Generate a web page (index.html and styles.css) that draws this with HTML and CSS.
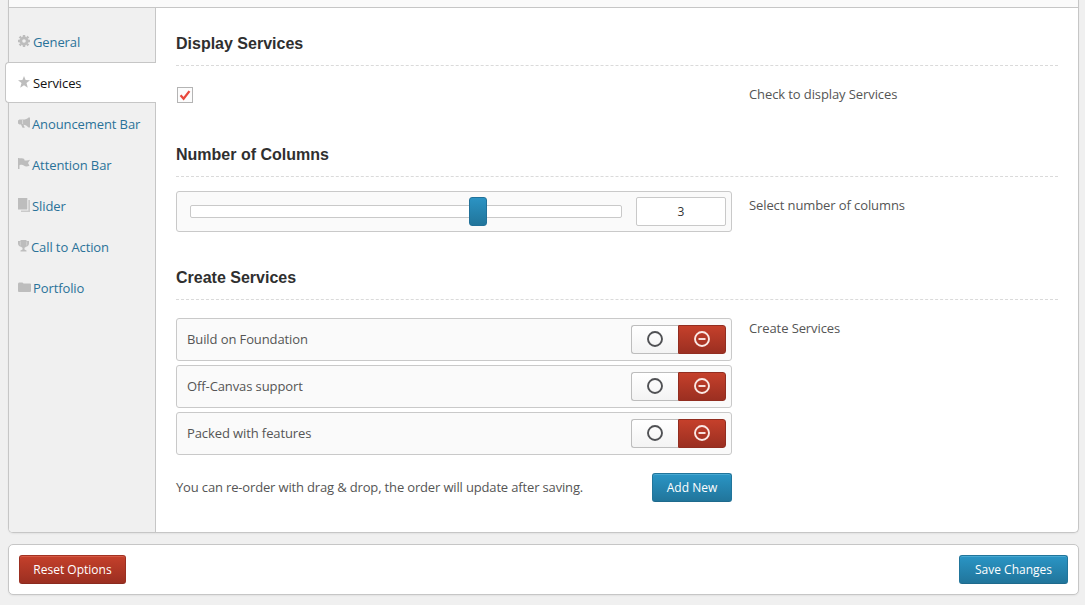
FILE: index.html
```html
<!DOCTYPE html>
<html lang="en">
<head>
<meta charset="utf-8">
<title>Theme Options</title>
<link rel="stylesheet" href="styles.css">
</head>
<body>
<main class="panel">
  <header class="panel-head"></header>
  <div class="panel-body">
    <nav class="nav">
      <a class="nav-item"><svg class="ico" viewBox="0 0 12 12"><g fill="none" stroke="#bdbdbd"><circle cx="6" cy="6" r="3.200" stroke-width="2.800"/><path stroke-width="2.400" d="M6 0v2M6 10v2M0 6h2M10 6h2M1.600 1.600l1.400 1.400M9 9l1.400 1.400M10.400 1.600L9 3M3 9l-1.400 1.400"/></g></svg><span class="t3">General</span></a>
      <a class="nav-item active"><svg class="ico" viewBox="0 0 12 12"><path d="M6 0l1.600 4.100 4.400.2-3.500 2.800L9.800 11.800 6 9.200 2.200 11.800 3.500 7.100 0 4.300l4.400-.2z"/></svg><span class="t3">Services</span></a>
      <a class="nav-item"><svg class="ico" viewBox="0 0 12 12"><path d="M10.500.500h1.500v10h-1.500C9 8.800 7.500 8 5.500 7.700l1.300 3.100H4.500L3 7.500H1.500L0 6.500v-3l1.500-1H5C7.500 2.500 9 2 10.500.500z"/><path d="M4.600 3v4" stroke="#f0f0f0" stroke-width=".6"/></svg><span class="t2">Anouncement Bar</span></a>
      <a class="nav-item"><svg class="ico" viewBox="0 0 12 12"><path d="M0 0h1.500v.6c2-.8 3.500-.4 4.800.3v1.300c1.800.7 3.700.5 5.700-.4L10 5l1.500 2.800C9 8.800 7 8.600 5.800 7.400 4.500 6.700 3 6.700 1.500 7.300V11H0z"/></svg><span class="t2">Attention Bar</span></a>
      <a class="nav-item"><svg class="ico ico-tall" viewBox="0 0 12 14"><path d="M0 0h9.300v11.500H0z"/><path opacity=".75" d="M10.300 2H12v12H3v-1.500h7.300z"/></svg><span class="t2">Slider</span></a>
      <a class="nav-item"><svg class="ico ico-cup" viewBox="0 0 11 12"><path d="M2.500 0h6v1H11v2.500C11 5.500 9.500 6.500 7.800 6.700c-.4.600-.9.900-1.300 1.100V9.500L8.500 10.500v1h-6v-1l2-1V7.800c-.4-.2-.9-.5-1.300-1.100C1.500 6.500 0 5.500 0 3.500V1h2.500z"/><path fill="none" stroke="#f0f0f0" stroke-width=".4" d="M2.300 1.500v4M8.700 1.500v4"/></svg><span class="t1">Call to Action</span></a>
      <a class="nav-item"><svg class="ico ico-folder" viewBox="0 0 13 11"><path d="M0 2Q0 .5 1 .5h3.500l1 1H12q1 0 1 1V9q0 1-1 1H1Q0 10 0 9z"/></svg><span class="t3">Portfolio</span></a>
    </nav>
    <div class="content">
      <section class="section s-check">
        <h3>Display Services</h3>
        <div class="row">
          <div class="field"><span class="checkbox"><svg width="14" height="14" viewBox="0 0 12 12"><path d="M2.200 6.200l2.600 3 5-6.500" fill="none" stroke="#e8483c" stroke-width="2"/></svg></span></div>
          <p class="desc">Check to display Services</p>
        </div>
      </section>
      <section class="section s-slider">
        <h3>Number of Columns</h3>
        <div class="row">
          <div class="field slider">
            <div class="track"><div class="handle"></div></div>
            <div class="value">3</div>
          </div>
          <p class="desc">Select number of columns</p>
        </div>
      </section>
      <section class="section">
        <h3>Create Services</h3>
        <div class="row">
          <div class="field list">
            <div class="item"><span>Build on Foundation</span><div class="group"><b class="toggle"><svg viewBox="0 0 16 16"><circle cx="8" cy="8" r="7" /></svg></b><b class="remove"><svg viewBox="0 0 16 16"><circle cx="8" cy="8" r="7"/><path d="M4.500 8h7"/></svg></b></div></div>
            <div class="item"><span>Off-Canvas support</span><div class="group"><b class="toggle"><svg viewBox="0 0 16 16"><circle cx="8" cy="8" r="7" /></svg></b><b class="remove"><svg viewBox="0 0 16 16"><circle cx="8" cy="8" r="7"/><path d="M4.500 8h7"/></svg></b></div></div>
            <div class="item"><span>Packed with features</span><div class="group"><b class="toggle"><svg viewBox="0 0 16 16"><circle cx="8" cy="8" r="7" /></svg></b><b class="remove"><svg viewBox="0 0 16 16"><circle cx="8" cy="8" r="7"/><path d="M4.500 8h7"/></svg></b></div></div>
            <div class="list-foot"><span>You can re-order with drag &amp; drop, the order will update after saving.</span><div class="btn blue add">Add New</div></div>
          </div>
          <p class="desc">Create Services</p>
        </div>
      </section>
    </div>
  </div>
</main>
<footer class="actions">
  <div class="btn red reset">Reset Options</div>
  <div class="btn blue save">Save Changes</div>
</footer>
</body>
</html>
```
FILE: styles.css
```css
* { box-sizing: border-box; }
body {
  margin: 0;
  height: 605px;
  overflow: hidden;
  background: #f0f0f0;
  font: 13px/20px "Open Sans", sans-serif;
  letter-spacing: -.1px;
  color: #555;
}
.panel {
  width: 1071px;
  height: 533px;
  margin-left: 8px;
  border: 1px solid #c6c6c6;
  border-top: 0;
  border-radius: 0 0 5px 5px;
  background: #fff;
  box-shadow: 0 1px 2px rgba(0, 0, 0, .06);
}
.panel-head {
  height: 8px;
  background: #fafafa;
  border-bottom: 1px solid #c6c6c6;
}
.panel-body { display: flex; height: 524px; }
.nav {
  width: 147px;
  padding-top: 13px;
  background: #f0f0f0;
  border-right: 1px solid #c6c6c6;
  border-bottom-left-radius: 4px;
}
.nav-item {
  display: flex;
  align-items: center;
  height: 41px;
  padding-left: 9px;
  color: #2a7299;
  white-space: nowrap;
}
.nav-item.active {
  margin: 0 -1px 0 -4px;
  padding-left: 12px;
  background: #fff;
  border: 1px solid #c6c6c6;
  border-right: 0;
  border-radius: 4px 0 0 4px;
  color: #111;
}
.ico { flex: none; width: 12px; height: 12px; fill: #bdbdbd; margin-top: -1px; }
.ico-tall { height: 14px; }
.ico-cup { width: 11px; }
.ico-folder { width: 13px; height: 11px; }
.t3 { margin-left: 3px; }
.ico-folder + .t3, .ico-cup + .t1 { margin-left: 2px; }
.t2 { margin-left: 2px; }
.content { width: 882px; margin-left: 20px; padding-top: 13px; }
.section h3 {
  margin: 0;
  height: 45px;
  padding-top: 13px;
  border-bottom: 1px dashed #dadada;
  font: bold 16px/20px "Liberation Sans", Arial, sans-serif;
  letter-spacing: 0;
  color: #2f2f2f;
}
.s-check { height: 111px; }
.s-slider { height: 123px; }
.row { display: flex; align-items: flex-start; }
.field { width: 556px; }
.desc { margin: 18px 0 0 17px; }
.checkbox {
  display: flex;
  align-items: center;
  justify-content: center;
  width: 16px;
  height: 16px;
  margin: 21px 0 0 1px;
  border: 1px solid #b4b4b4;
  background: #fcfcfc;
}
.slider {
  display: flex;
  align-items: center;
  justify-content: space-between;
  height: 41px;
  margin-top: 14px;
  padding: 0 5px 0 13px;
  border: 1px solid #c9c9c9;
  border-radius: 3px;
  background: #fafafa;
}
.track {
  display: flex;
  align-items: center;
  width: 432px;
  height: 13px;
  border: 1px solid #c9c9c9;
  border-radius: 2px;
  background: #fff;
}
.handle {
  flex: none;
  width: 18px;
  height: 29px;
  margin-left: 278px;
  border: 1px solid #217199;
  border-radius: 3px;
  background: linear-gradient(#2b93c3, #21759b);
}
.value {
  width: 90px;
  height: 29px;
  border: 1px solid #c9c9c9;
  border-radius: 2px;
  background: #fff;
  color: #333;
  font-size: 12px;
  line-height: 27px;
  text-align: center;
}
.list { padding-top: 18px; }
.item {
  display: flex;
  align-items: center;
  justify-content: space-between;
  height: 43px;
  margin-bottom: 4px;
  padding: 0 5px 0 10px;
  border: 1px solid #c9c9c9;
  border-radius: 3px;
  background: #fafafa;
}
.item > span { padding-bottom: 2px; }
.group { display: flex; }
.group b {
  display: flex;
  align-items: center;
  justify-content: center;
  height: 29px;
  padding-bottom: 1px;
}
.group svg { width: 16px; height: 16px; fill: none; stroke-width: 1.9; }
.toggle {
  width: 47px;
  border: 1px solid #bdbdbd;
  border-right: 0;
  border-radius: 3px 0 0 3px;
  background: linear-gradient(#fff, #f3f3f3);
}
.toggle svg { stroke: #505154; }
.remove {
  width: 48px;
  border: 1px solid #922d20;
  border-radius: 0 3px 3px 0;
  background: linear-gradient(#c5402b, #9b2f21);
}
.remove svg { stroke: #fbe9e5; }
.list-foot {
  display: flex;
  align-items: center;
  justify-content: space-between;
  height: 29px;
  margin-top: 18px;
}
.list-foot > span { padding-bottom: 2px; letter-spacing: -.155px; }
.btn {
  height: 29px;
  border: 1px solid;
  border-radius: 3px;
  color: #fff;
  font-size: 12px;
  letter-spacing: 0;
  line-height: 27px;
  text-align: center;
  white-space: nowrap;
}
.blue {
  border-color: #21759b #21759b #1e6a8d;
  background: linear-gradient(#2a95c5, #21759b);
  box-shadow: inset 0 1px 0 rgba(120, 200, 230, .4);
}
.red {
  border-color: #a23222 #9b2f21 #8b2a1e;
  background: linear-gradient(#c5402b, #9b2f21);
  box-shadow: inset 0 1px 0 rgba(240, 130, 110, .4);
}
.add { width: 80px; }
.reset { width: 107px; }
.save { width: 109px; }
.actions {
  display: flex;
  align-items: center;
  justify-content: space-between;
  width: 1071px;
  height: 51px;
  margin: 11px 0 0 8px;
  padding: 0 10px;
  border: 1px solid #c6c6c6;
  border-radius: 5px;
  background: #fff;
  box-shadow: 0 1px 2px rgba(0, 0, 0, .06);
}
```
